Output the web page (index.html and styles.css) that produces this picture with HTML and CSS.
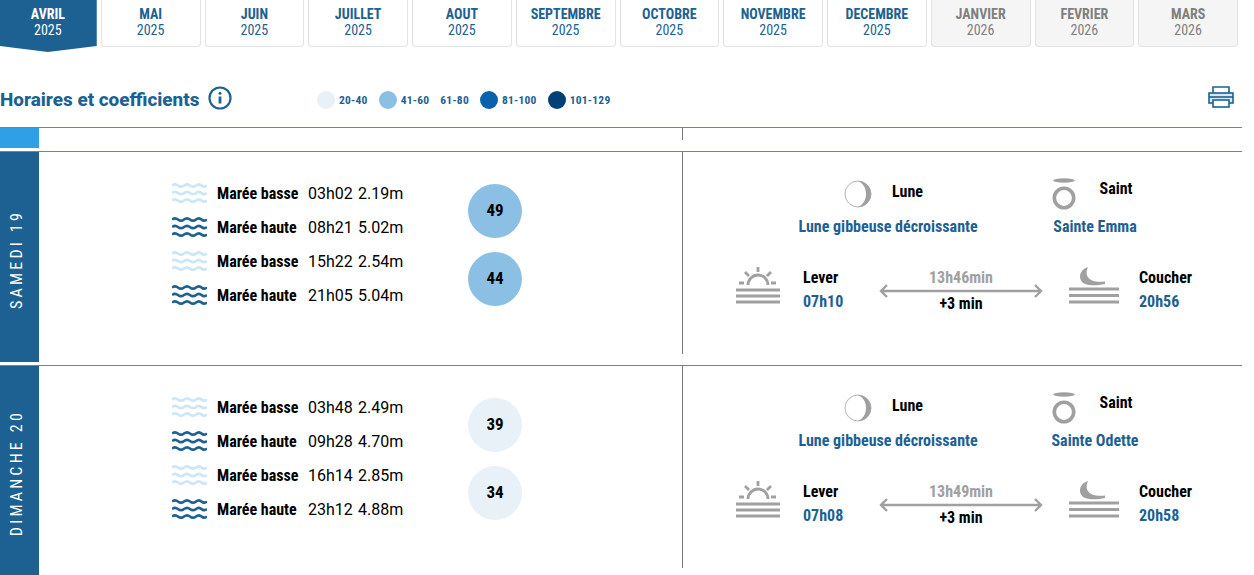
FILE: index.html
```html
<!DOCTYPE html>
<html lang="fr">
<head>
    <meta charset="UTF-8">
    <meta name="viewport" content="width=device-width, initial-scale=1.0">
    <title>Horaires et coefficients</title>
    <link rel="stylesheet" href="styles.css">
</head>
<body>

<svg class="sprites" width="0" height="0">
    <symbol id="waves" viewBox="0 0 35 22">
        <g fill="none" stroke="currentColor" stroke-width="2.600">
            <path d="M0 3.500q3-2.400 6 0t6 0 6 0 6 0 5.500 0 5.500 0"/>
            <path d="M0 11q3-2.400 6 0t6 0 6 0 6 0 5.500 0 5.500 0"/>
            <path d="M0 18.500q3-2.400 6 0t6 0 6 0 6 0 5.500 0 5.500 0"/>
        </g>
    </symbol>
    <symbol id="moon" viewBox="0 0 28 28">
        <circle cx="14" cy="14" r="13" fill="#fff" stroke="#b5b5b5" stroke-width="1"/>
        <path d="M14 1A13 13 0 0 1 14 27C19 25 22 20 22 14C22 8 19 3 14 1z" fill="#a0a0a0"/>
    </symbol>
    <symbol id="halo" viewBox="0 0 24 32">
        <ellipse cx="12" cy="2.500" rx="11" ry="2.200" fill="#a0a0a0"/>
        <circle cx="12" cy="20" r="9.700" fill="none" stroke="#a0a0a0" stroke-width="3.600"/>
    </symbol>
    <symbol id="sunrise" viewBox="0 0 44 37">
        <g fill="none" stroke="#a0a0a0" stroke-width="2.800">
            <path d="M12 18a10 10 0 0 1 20 0"/>
            <path d="M22 0v5M9 5l4 4M35 5l-4 4M3 16h5M35 16h5"/>
            <path d="M0 23h44M0 29h44M0 35h44"/>
        </g>
    </symbol>
    <symbol id="moonset" viewBox="0 0 50 37">
        <path d="M19 0C9 3 9 14 16 17C21 19 29 18.500 36 17L36 14.500C29 15.500 21.500 14.500 18.500 9.500C17 6.500 17.500 3 19 0z" fill="#a0a0a0"/>
        <path d="M0 22h50M0 28.500h50M0 35h50" fill="none" stroke="#a0a0a0" stroke-width="2.800"/>
    </symbol>
    <symbol id="arrow" viewBox="0 0 164 14">
        <path d="M2 7h160M8 1l-6 6 6 6M156 1l6 6-6 6" fill="none" stroke="#a0a0a0" stroke-width="2.400"/>
    </symbol>
</svg>

<nav class="months">
    <a class="month active"><b>AVRIL</b><span>2025</span></a>
    <a class="month"><b>MAI</b><span>2025</span></a>
    <a class="month"><b>JUIN</b><span>2025</span></a>
    <a class="month"><b>JUILLET</b><span>2025</span></a>
    <a class="month"><b>AOUT</b><span>2025</span></a>
    <a class="month"><b>SEPTEMBRE</b><span>2025</span></a>
    <a class="month"><b>OCTOBRE</b><span>2025</span></a>
    <a class="month"><b>NOVEMBRE</b><span>2025</span></a>
    <a class="month"><b>DECEMBRE</b><span>2025</span></a>
    <a class="month off"><b>JANVIER</b><span>2026</span></a>
    <a class="month off"><b>FEVRIER</b><span>2026</span></a>
    <a class="month off"><b>MARS</b><span>2026</span></a>
</nav>

<main class="page">
    <div class="title-row">
        <h1>Horaires et coefficients</h1>
        <svg class="info" viewBox="0 0 24 24">
            <circle cx="12" cy="12" r="10.500" fill="none" stroke="currentColor" stroke-width="2.200"/>
            <circle cx="12" cy="7.300" r="1.500" fill="currentColor"/>
            <path d="M12 10.500v7" stroke="currentColor" stroke-width="2.800"/>
        </svg>
        <ul class="legend">
            <li><i class="dot c1"></i>20-40</li>
            <li><i class="dot c2"></i>41-60</li>
            <li>61-80</li>
            <li><i class="dot c3"></i>81-100</li>
            <li><i class="dot c4"></i>101-129</li>
        </ul>
        <svg class="printer" viewBox="0 0 26 22">
            <path d="M5 7V1h16v6" fill="none" stroke="currentColor" stroke-width="1.600"/>
            <rect x="1" y="7" width="24" height="10" fill="#d6e8f3" stroke="currentColor" stroke-width="1.600"/>
            <path d="M1 11h24" stroke="currentColor" stroke-width="1.600"/>
            <rect x="5" y="14" width="16" height="7" fill="#fff" stroke="currentColor" stroke-width="1.600"/>
        </svg>
    </div>

    <div class="stub">
        <div class="stub-side"></div>
        <div class="stub-divider"></div>
    </div>

    <section class="day">
        <h2 class="day-name"><span>SAMEDI 19</span></h2>
        <div class="tides">
            <ul class="tide-list">
                <li><svg class="wave low"><use href="#waves"/></svg><b>Marée basse</b><span class="time">03h02</span><span class="height">2.19m</span></li>
                <li><svg class="wave high"><use href="#waves"/></svg><b>Marée haute</b><span class="time">08h21</span><span class="height">5.02m</span></li>
                <li><svg class="wave low"><use href="#waves"/></svg><b>Marée basse</b><span class="time">15h22</span><span class="height">2.54m</span></li>
                <li><svg class="wave high"><use href="#waves"/></svg><b>Marée haute</b><span class="time">21h05</span><span class="height">5.04m</span></li>
            </ul>
            <div class="coefs">
                <div class="coef c2">49</div>
                <div class="coef c2">44</div>
            </div>
        </div>
        <div class="sky">
            <div class="sky-top">
                <div class="info-block moon-block">
                    <div class="info-head"><svg class="moon"><use href="#moon"/></svg><b class="lune">Lune</b></div>
                    <p>Lune gibbeuse décroissante</p>
                </div>
                <div class="info-block saint-block">
                    <div class="info-head"><svg class="halo"><use href="#halo"/></svg><b class="saint">Saint</b></div>
                    <p>Sainte Emma</p>
                </div>
            </div>
            <div class="sun">
                <svg class="sunrise"><use href="#sunrise"/></svg>
                <div class="sun-time"><b>Lever</b><em>07h10</em></div>
                <div class="length">
                    <span>13h46min</span>
                    <svg class="arrow"><use href="#arrow"/></svg>
                    <b>+3 min</b>
                </div>
                <svg class="moonset"><use href="#moonset"/></svg>
                <div class="sun-time"><b>Coucher</b><em>20h56</em></div>
            </div>
        </div>
    </section>

    <section class="day">
        <h2 class="day-name"><span>DIMANCHE 20</span></h2>
        <div class="tides">
            <ul class="tide-list">
                <li><svg class="wave low"><use href="#waves"/></svg><b>Marée basse</b><span class="time">03h48</span><span class="height">2.49m</span></li>
                <li><svg class="wave high"><use href="#waves"/></svg><b>Marée haute</b><span class="time">09h28</span><span class="height">4.70m</span></li>
                <li><svg class="wave low"><use href="#waves"/></svg><b>Marée basse</b><span class="time">16h14</span><span class="height">2.85m</span></li>
                <li><svg class="wave high"><use href="#waves"/></svg><b>Marée haute</b><span class="time">23h12</span><span class="height">4.88m</span></li>
            </ul>
            <div class="coefs">
                <div class="coef c1">39</div>
                <div class="coef c1">34</div>
            </div>
        </div>
        <div class="sky">
            <div class="sky-top">
                <div class="info-block moon-block">
                    <div class="info-head"><svg class="moon"><use href="#moon"/></svg><b class="lune">Lune</b></div>
                    <p>Lune gibbeuse décroissante</p>
                </div>
                <div class="info-block saint-block">
                    <div class="info-head"><svg class="halo"><use href="#halo"/></svg><b class="saint">Saint</b></div>
                    <p>Sainte Odette</p>
                </div>
            </div>
            <div class="sun">
                <svg class="sunrise"><use href="#sunrise"/></svg>
                <div class="sun-time"><b>Lever</b><em>07h08</em></div>
                <div class="length">
                    <span>13h49min</span>
                    <svg class="arrow"><use href="#arrow"/></svg>
                    <b>+3 min</b>
                </div>
                <svg class="moonset"><use href="#moonset"/></svg>
                <div class="sun-time"><b>Coucher</b><em>20h58</em></div>
            </div>
        </div>
    </section>
</main>

</body>
</html>
```

FILE: styles.css
```css
html, body {
    overflow: hidden;
}
body {
    margin: 0;
    background-color: #fff;
    color: #000;
    font-family: "Roboto Condensed", Roboto, sans-serif;
    font-stretch: 75%;
    font-size: 16px;
}
.sprites {
    display: block;
    height: 0;
}
.months {
    display: flex;
    gap: 4px;
    width: 1239px;
    height: 52px;
    margin-left: -1px;
}
.month {
    flex: 1;
    box-sizing: border-box;
    height: 47px;
    display: flex;
    flex-direction: column;
    align-items: center;
    padding-top: 6px;
    background-color: #fff;
    border: 1px solid #e3e3e3;
    border-top: none;
    border-radius: 0 0 4px 4px;
    color: #1c6191;
    font-size: 14px;
    line-height: 16px;
}
.month.active {
    height: 52px;
    background-color: #1c6191;
    border: none;
    color: #fff;
    clip-path: polygon(0 0, 100% 0, 100% 46px, 50% 100%, 0 46px);
}
.month.off {
    background-color: #f5f5f5;
    color: #7f7f7f;
}
.page {
    width: 1242px;
}
.title-row {
    box-sizing: border-box;
    display: flex;
    align-items: center;
    height: 76px;
    padding-top: 20px;
    border-bottom: 1px solid #2e9bd0;
    color: #1c6191;
}
.title-row h1 {
    margin: 0;
    width: 208px;
    font-size: 18.900px;
    font-family: Roboto, sans-serif;
    font-stretch: 100%;
    font-weight: 800;
    white-space: nowrap;
}
.info {
    width: 24px;
    height: 24px;
    margin-bottom: 4px;
}
.legend {
    display: flex;
    align-items: center;
    gap: 11px;
    margin: 0 0 0 85px;
    padding: 0;
    list-style: none;
    font-size: 11.500px;
    font-weight: 700;
    letter-spacing: .25px;
}
.legend li {
    display: flex;
    align-items: center;
    gap: 4px;
}
.dot {
    width: 18px;
    height: 18px;
    border-radius: 50%;
}
.c1 { background-color: #e8f0f8; }
.c2 { background-color: #8cbfe4; }
.c3 { background-color: #0761ad; }
.c4 { background-color: #044078; }
.printer {
    width: 26px;
    height: 22px;
    margin: 0 8px 5px auto;
}
.stub {
    display: flex;
    height: 23px;
}
.stub-side {
    width: 39px;
    height: 20px;
    background-color: #2f9fe6;
}
.stub-divider {
    width: 1px;
    height: 12px;
    margin-left: 643px;
    background-color: #777;
}
.day {
    display: flex;
    height: 213px;
    border-top: 1px solid #2e9bd0;
}
.day-name {
    box-sizing: border-box;
    flex: none;
    width: 39px;
    height: 210px;
    margin: 0;
    display: flex;
    align-items: center;
    justify-content: center;
    padding: 4px 7px 0 0;
    background-color: #1c6191;
    color: #fff;
    font-size: 16px;
    font-weight: 400;
    letter-spacing: 3.200px;
}
.day-name span {
    writing-mode: vertical-rl;
    transform: rotate(180deg);
}
.tides {
    flex: none;
    width: 644px;
    height: 202px;
    box-sizing: border-box;
    border-right: 1px solid #777;
    display: flex;
    padding: 24px 0 0 133px;
}
.tide-list {
    margin: 0;
    padding: 0;
    list-style: none;
    width: 296px;
}
.tide-list li {
    display: flex;
    align-items: center;
    height: 34px;
}
.tide-list b {
    width: 91px;
}
.time,
.height {
    font-family: Roboto, sans-serif;
    font-stretch: 100%;
}
.time {
    width: 50px;
}
.wave {
    width: 35px;
    height: 22px;
    margin-right: 10px;
}
.low { color: #cbe6f8; }
.high { color: #1c6191; }
.coefs {
    display: flex;
    flex-direction: column;
    gap: 14px;
    padding-top: 8px;
}
.coef {
    box-sizing: border-box;
    width: 54px;
    height: 54px;
    padding-bottom: 3px;
    border-radius: 50%;
    display: flex;
    align-items: center;
    justify-content: center;
    font-size: 17px;
    font-weight: 700;
}
.sky {
    flex: 1;
}
.sky-top {
    display: flex;
    height: 85px;
    padding: 26px 0 0 115px;
    box-sizing: border-box;
}
.info-block p {
    margin: 9px 0 0;
    color: #1c6191;
    font-weight: 700;
    text-align: center;
    line-height: 18px;
}
.moon-block {
    width: 180px;
}
.saint-block {
    width: 90px;
    margin-left: 72px;
}
.info-head {
    display: flex;
    justify-content: center;
    align-items: center;
    height: 31px;
}
.moon-block .info-head {
    padding-right: 9px;
}
.saint-block .info-head {
    padding-right: 6px;
}
.moon {
    width: 28px;
    height: 28px;
    margin-right: 20px;
}
.halo {
    width: 24px;
    height: 32px;
    margin-right: 24px;
}
.lune {
    margin-bottom: 4px;
}
.saint {
    margin-bottom: 10px;
}
.sun {
    display: flex;
    padding: 32px 0 0 53px;
}
.sunrise {
    width: 44px;
    height: 37px;
    margin: -2px 23px 0 0;
}
.sun-time {
    display: flex;
    flex-direction: column;
    gap: 6px;
    line-height: 18px;
    width: 76px;
}
.sun-time em {
    color: #1c6191;
    font-style: normal;
    font-weight: 700;
}
.length {
    width: 164px;
    display: flex;
    flex-direction: column;
    align-items: center;
    line-height: 18px;
}
.length span {
    color: #a0a0a0;
    font-weight: 700;
}
.arrow {
    width: 164px;
    height: 14px;
    margin: -3px 0 -3px;
}
.moonset {
    width: 50px;
    height: 37px;
    margin: -2px 20px 0 26px;
}
```
